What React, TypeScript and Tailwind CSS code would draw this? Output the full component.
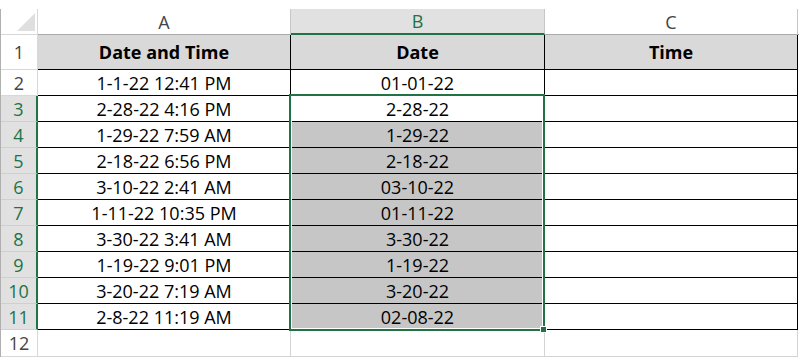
import React from "react";

const rows: [string, string][] = [
  ["1-1-22 12:41 PM", "01-01-22"],
  ["2-28-22 4:16 PM", "2-28-22"],
  ["1-29-22 7:59 AM", "1-29-22"],
  ["2-18-22 6:56 PM", "2-18-22"],
  ["3-10-22 2:41 AM", "03-10-22"],
  ["1-11-22 10:35 PM", "01-11-22"],
  ["3-30-22 3:41 AM", "3-30-22"],
  ["1-19-22 9:01 PM", "1-19-22"],
  ["3-20-22 7:19 AM", "3-20-22"],
  ["2-8-22 11:19 AM", "02-08-22"],
];

export default function App() {
  return (
    <div className="relative w-[799px] h-[357px] bg-white pt-[9px] overflow-hidden font-['Open_Sans',sans-serif] text-[18px] leading-none text-black">
      <div className="border-l border-[#b0b0b0]">
        {/* column headers */}
        <div className="flex h-[26px]">
          <div className="w-[37px] shrink-0 flex items-end justify-end pr-[2px] pb-[3px] border-r border-b border-[#d8d8d8] bg-white">
            <svg width="18" height="18" viewBox="0 0 18 18">
              <polygon points="0,18 18,18 18,0" fill="#dfdfdf" />
            </svg>
          </div>
          <div className="w-[253px] shrink-0 flex items-center justify-center border-r border-r-[#c6c6c6] border-b border-b-[#ababab] bg-white text-[#444]">
            A
          </div>
          <div className="w-[254px] shrink-0 flex items-center justify-center border-r border-r-[#c6c6c6] border-b-2 border-b-[#217346] bg-[#e1e1e1] text-[#217346]">
            B
          </div>
          <div className="w-[253px] shrink-0 flex items-center justify-center border-r border-r-[#c6c6c6] border-b border-b-[#ababab] bg-white text-[#444]">
            C
          </div>
          <div className="flex-1 border-b border-b-[#ababab]" />
        </div>

        {/* row 1 */}
        <div className="flex h-[35px]">
          <div className="w-[37px] shrink-0 flex items-center justify-center border-r border-b border-[#d8d8d8] bg-white text-[#444]">
            1
          </div>
          <div className="w-[253px] shrink-0 flex items-center justify-center border-r border-b border-black bg-[#d9d9d9] font-bold">
            Date and Time
          </div>
          <div className="w-[254px] shrink-0 flex items-center justify-center border-r border-b border-black bg-[#d9d9d9] font-bold">
            Date
          </div>
          <div className="w-[253px] shrink-0 flex items-center justify-center border-r border-b border-black bg-[#d9d9d9] font-bold">
            Time
          </div>
          <div className="flex-1" />
        </div>

        {rows.map(([dt, d], i) => {
          const rowNum = i + 2;
          const selected = rowNum >= 3;
          const shaded = rowNum >= 4;
          return (
            <div key={rowNum} className="flex h-[26px]">
              {selected ? (
                <div className="w-[37px] shrink-0 flex items-center justify-center border-r-2 border-r-[#217346] border-b border-b-[#cfcfcf] bg-[#e1e1e1] text-[#217346]">
                  {rowNum}
                </div>
              ) : (
                <div className="w-[37px] shrink-0 flex items-center justify-center border-r border-b border-[#d8d8d8] bg-white text-[#444]">
                  {rowNum}
                </div>
              )}
              <div className="w-[253px] shrink-0 flex items-center justify-center border-r border-b border-black bg-white">
                {dt}
              </div>
              {shaded ? (
                <div className="w-[254px] shrink-0 flex items-center justify-center border-r border-b border-black bg-[#c6c6c6]">
                  {d}
                </div>
              ) : (
                <div className="w-[254px] shrink-0 flex items-center justify-center border-r border-b border-black bg-white">
                  {d}
                </div>
              )}
              <div className="w-[253px] shrink-0 border-r border-b border-black bg-white" />
              <div className="flex-1" />
            </div>
          );
        })}

        {/* row 12 */}
        <div className="flex h-[27px]">
          <div className="w-[37px] shrink-0 flex items-center justify-center border-r border-b border-[#d8d8d8] bg-white text-[#444]">
            12
          </div>
          <div className="w-[253px] shrink-0 border-r border-b border-[#d4d4d4]" />
          <div className="w-[254px] shrink-0 border-r border-b border-[#d4d4d4]" />
          <div className="w-[253px] shrink-0 border-r border-b border-[#d4d4d4]" />
          <div className="flex-1" />
        </div>
      </div>

      {/* selection border */}
      <div className="absolute left-[289px] top-[94px] w-[256px] h-[237px] border-2 border-[#217346] shadow-[inset_0_0_0_1px_#ffffff] pointer-events-none" />
      {/* fill handle */}
      <div className="absolute left-[540px] top-[326px] w-[7px] h-[7px] bg-white p-[1px]">
        <div className="w-full h-full bg-[#217346]" />
      </div>
    </div>
  );
}
